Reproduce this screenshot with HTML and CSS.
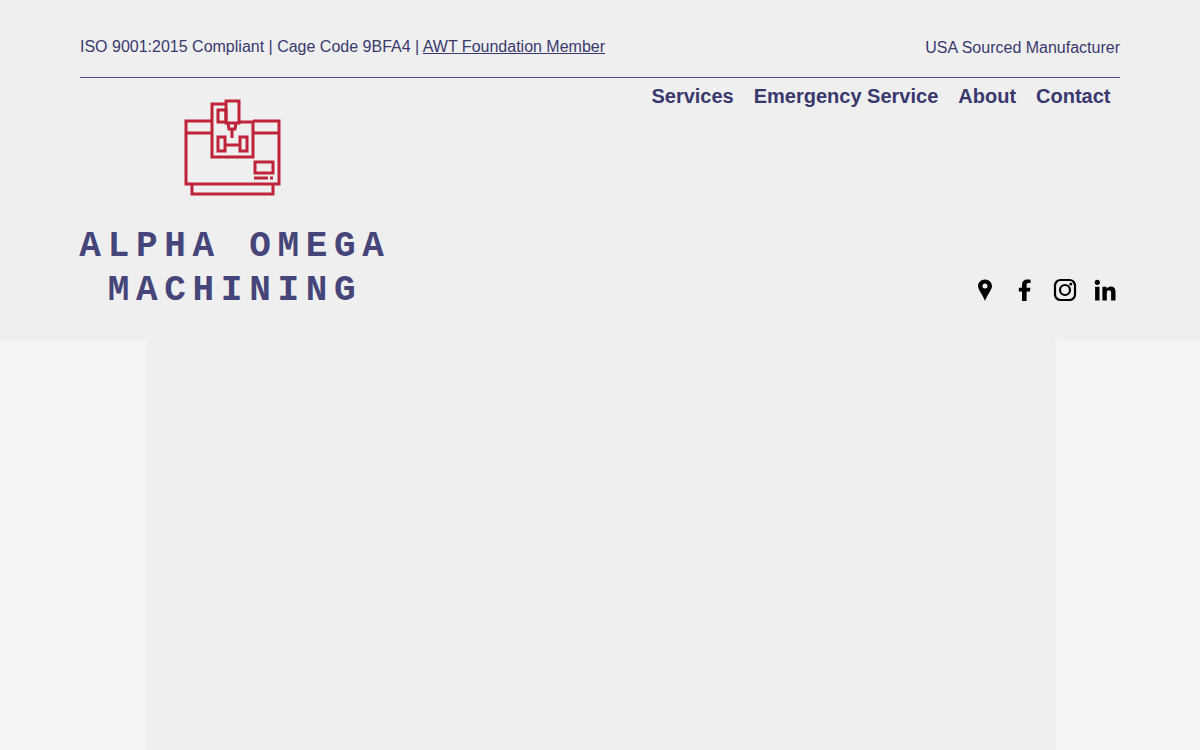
FILE: index.html
```html
<!DOCTYPE html>
<html lang="en">
<head>
  <meta charset="UTF-8">
  <title>Alpha Omega Machining</title>
  <link rel="stylesheet" href="styles.css">
</head>
<body>

<!-- Header -->
<header class="site-header">
  <div class="top-bar">
    <p class="top-left">ISO 9001:2015 Compliant | Cage Code 9BFA4 | <a href="#awt">AWT Foundation Member</a></p>
    <p class="top-right">USA Sourced Manufacturer</p>
  </div>

  <div class="header-main">
    <div class="brand">
      <svg class="brand-icon" viewBox="0 0 100 100" width="100" height="100" fill="none" stroke="#be2339" stroke-width="3">
        <path d="M29 23H3V86H96V23H70M3 35H29M70 35H96"/>
        <path d="M9 86V96H90V86"/>
        <path d="M43 6H29V59H70V24H56"/>
        <rect x="43" y="3" width="13" height="22"/>
        <rect x="35" y="12" width="8" height="12"/>
        <path d="M45 25L46 31H52L53 25M49 31V40M42 47H57"/>
        <rect x="35" y="39" width="7" height="14"/>
        <rect x="57" y="39" width="7" height="14"/>
        <rect x="72" y="64" width="18" height="11"/>
        <path d="M71 80H85M87 80H90"/>
      </svg>
      <div class="brand-name">ALPHA OMEGA<br>MACHINING</div>
    </div>

    <div class="header-side">
      <nav class="main-nav">
        <a href="#services">Services</a>
        <a href="#emergency">Emergency Service</a>
        <a href="#about">About</a>
        <a href="#contact">Contact</a>
      </nav>

      <div class="social">
        <svg viewBox="0 0 24 24" width="24" height="24"><path fill-rule="evenodd" d="M12 1.500C8.300 1.500 5 4.400 5 8C5 12 9.800 16.500 12 23C14.200 16.500 19 12 19 8C19 4.400 15.700 1.500 12 1.500ZM12 5.600A2.500 2.500 0 1 1 12 10.600A2.500 2.500 0 1 1 12 5.600Z"/></svg>
        <svg viewBox="0 0 24 24" width="24" height="24"><path d="M9 23V13.500H5.800V9.800H9V7C9 3.500 11.200 1.500 14.300 1.500C15.800 1.500 17 1.600 17.600 1.700V5.100H15.600C14 5.100 13.600 5.900 13.600 7V9.800H17.400L16.900 13.500H13.600V23Z"/></svg>
        <svg viewBox="0 0 24 24" width="24" height="24" fill="none" stroke="#000" stroke-width="2.200"><rect x="2" y="2" width="20" height="20" rx="5.500"/><circle cx="12" cy="12" r="5"/><circle cx="17.800" cy="6.200" r="1.400" fill="#000" stroke="none"/></svg>
        <svg viewBox="0 0 24 24" width="24" height="24"><circle cx="4.300" cy="4.300" r="2.600"/><path d="M2.100 8.800H6.500V22.500H2.100ZM9.400 8.800H13.600V10.700C14.400 9.400 15.900 8.400 17.900 8.400C21.600 8.400 22.500 10.800 22.500 14.300V22.500H18.100V15.200C18.100 13.500 17.700 12.200 16 12.200C14.300 12.200 13.800 13.500 13.800 15.200V22.500H9.400Z"/></svg>
      </div>
    </div>
  </div>
</header>

<!-- Empty content strip -->
<main class="content">
  <div class="side-panel"></div>
  <div class="center-panel"></div>
  <div class="side-panel"></div>
</main>

</body>
</html>
```

FILE: styles.css
```css
html, body {
  height: 100%;
}

body {
  margin: 0;
  font-family: "Liberation Sans", Arial, sans-serif;
  background-color: #f5f5f5;
  color: #39396e;
  display: flex;
  flex-direction: column;
  overflow: hidden;
}

.site-header {
  background-color: #efefef;
  height: 340px;
  padding: 0 80px;
  box-sizing: border-box;
  flex-shrink: 0;
}

.top-bar {
  display: flex;
  justify-content: space-between;
  align-items: flex-start;
  height: 78px;
  padding-top: 38px;
  box-sizing: border-box;
  border-bottom: 1px solid #4a4a8c;
  font-size: 16px;
  line-height: 18px;
}

.top-bar p {
  margin: 0;
}

.top-bar .top-right {
  margin-top: 1px;
}

.top-left a {
  color: inherit;
}

.header-main {
  display: flex;
  justify-content: space-between;
}

.brand {
  width: 306px;
  display: flex;
  flex-direction: column;
  align-items: center;
  padding-top: 20px;
}

.brand-icon {
  display: block;
}

.brand-name {
  margin-top: 27px;
  padding-left: 4px;
  font-family: "Liberation Mono", monospace;
  font-weight: bold;
  font-size: 36px;
  line-height: 44px;
  letter-spacing: 6.700px;
  text-align: center;
  white-space: nowrap;
  color: #45457a;
}

.header-side {
  display: flex;
  flex-direction: column;
  align-items: flex-end;
}

.main-nav {
  display: flex;
  gap: 20px;
  padding: 6px 9.500px 0 0;
  line-height: 24px;
}

.main-nav a {
  color: #39396e;
  font-size: 20px;
  font-weight: bold;
  text-decoration: none;
}

.social {
  display: flex;
  gap: 16px;
  margin-top: 170px;
  padding-right: 3px;
}

.content {
  flex: 1;
  display: grid;
  grid-template-columns: 147px 1fr 145px;
}

.side-panel {
  background-color: #f5f5f5;
}

.center-panel {
  background-color: #efeff0;
  box-shadow: 0 0 5px #efeff0;
  position: relative;
}
```
